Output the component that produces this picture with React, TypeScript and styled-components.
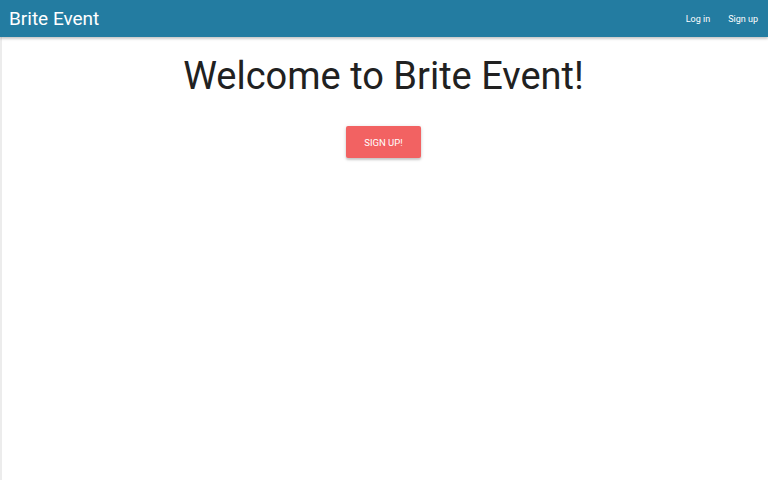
import React from "react";
import styled, { createGlobalStyle } from "styled-components";

const Global = createGlobalStyle`
  html, body { margin: 0; padding: 0; background: #fff; }
  body { font-family: Roboto, "Noto Sans", sans-serif; }
  * { box-sizing: border-box; }
`;

const Page = styled.div`
  min-height: 480px;
  box-shadow: inset 2px 0 0 #ececec;
  display: flex;
  flex-direction: column;
`;

const Nav = styled.nav`
  height: 37px;
  background: #237ca1;
  display: flex;
  align-items: center;
  justify-content: space-between;
  padding: 0 10px 0 9px;
  box-shadow: 0 2px 2px 0 rgba(0,0,0,0.14), 0 1px 4px 0 rgba(0,0,0,0.12);
  color: #fff;
`;

const Brand = styled.a`
  font-size: 19px;
  color: #fff;
  text-decoration: none;
`;

const Links = styled.ul`
  list-style: none;
  display: flex;
  gap: 18px;
  margin: 0;
  padding: 0;
`;

const LinkItem = styled.li`
  font-size: 9px;
  color: #fff;
`;

const Main = styled.main`
  display: flex;
  flex-direction: column;
  align-items: center;
  padding-right: 1px;
`;

const Title = styled.h1`
  margin: 16px 0 0;
  font-size: 38px;
  font-weight: 400;
  color: #212121;
  line-height: 46px;
`;

const Button = styled.button`
  margin-top: 27px;
  width: 75px;
  height: 32px;
  border: none;
  border-radius: 2px;
  background: #f26262;
  color: #fff;
  font-family: Roboto, sans-serif;
  font-size: 9.5px;
  text-transform: uppercase;
  box-shadow: 0 2px 2px 0 rgba(0,0,0,0.14), 0 1px 4px 0 rgba(0,0,0,0.14);
`;

export default function App() {
  return (
    <>
      <Global />
      <Page>
        <Nav>
          <Brand>Brite Event</Brand>
          <Links>
            <LinkItem>Log in</LinkItem>
            <LinkItem>Sign up</LinkItem>
          </Links>
        </Nav>
        <Main>
          <Title>Welcome to Brite Event!</Title>
          <Button>Sign up!</Button>
        </Main>
      </Page>
    </>
  );
}
